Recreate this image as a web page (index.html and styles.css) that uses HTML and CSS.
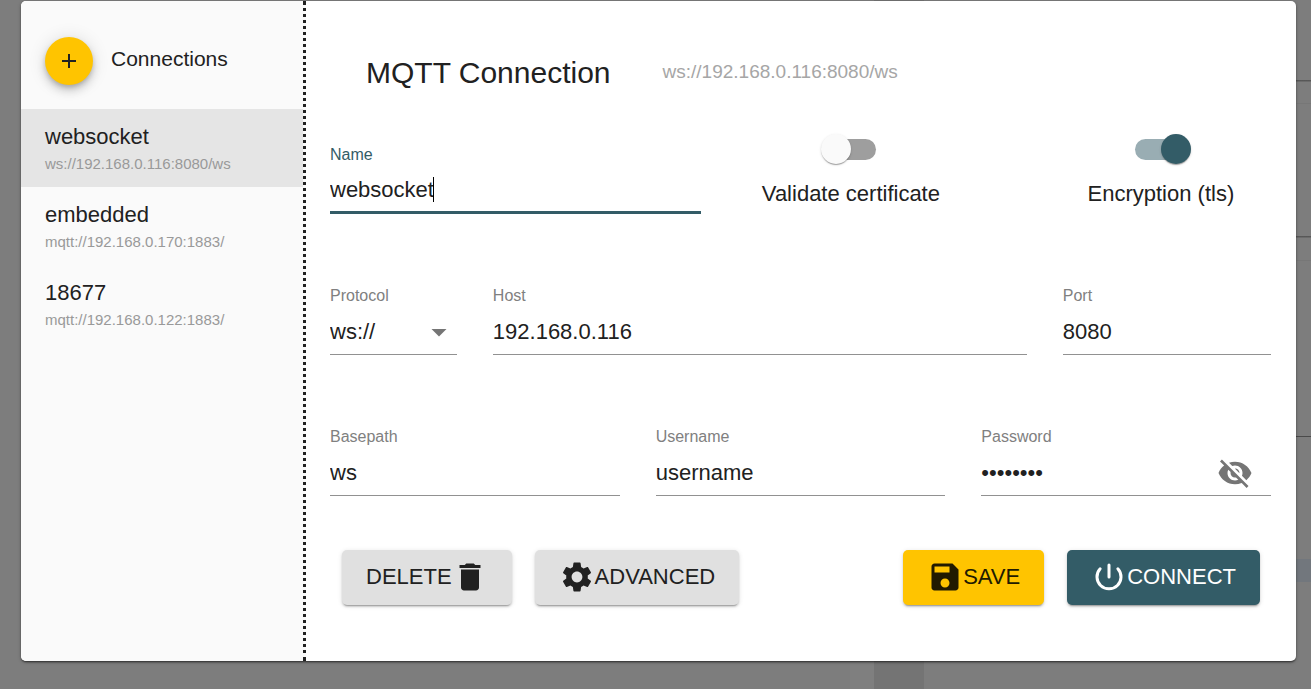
FILE: index.html
```html
<!DOCTYPE html>
<html lang="en">
<head>
<meta charset="utf-8">
<title>MQTT Connection</title>
<link rel="stylesheet" href="styles.css">
</head>
<body>
<main class="dialog">
  <aside class="sidebar">
    <div class="sidebar-head">
      <button class="fab" type="button" aria-label="Add connection">
        <svg viewBox="0 0 24 24" width="24" height="24"><path d="M19 13h-6v6h-2v-6H5v-2h6V5h2v6h6v2z"/></svg>
      </button>
      <h2 class="sidebar-title">Connections</h2>
    </div>
    <ul class="list">
      <li><button class="item selected" type="button"><span class="item-name">websocket</span><span class="item-url">ws://192.168.0.116:8080/ws</span></button></li>
      <li><button class="item" type="button"><span class="item-name">embedded</span><span class="item-url">mqtt://192.168.0.170:1883/</span></button></li>
      <li><button class="item" type="button"><span class="item-name">18677</span><span class="item-url">mqtt://192.168.0.122:1883/</span></button></li>
    </ul>
  </aside>
  <form class="settings">
    <header class="head">
      <h1 class="title">MQTT Connection</h1>
      <span class="subtitle">ws://192.168.0.116:8080/ws</span>
    </header>
    <div class="fields">
      <div class="field span-5 focused">
        <label for="name">Name</label>
        <div class="box"><input class="fit" id="name" type="text" value="websocket"><span class="caret"></span></div>
      </div>
      <div class="toggle span-4 toggle-cert">
        <input class="switch" id="cert" type="checkbox">
        <label for="cert">Validate certificate</label>
      </div>
      <div class="toggle span-3 toggle-tls">
        <input class="switch" id="tls" type="checkbox" checked>
        <label for="tls">Encryption (tls)</label>
      </div>

      <div class="field span-2">
        <label for="protocol">Protocol</label>
        <div class="box select-box">
          <select id="protocol"><option>ws://</option><option>mqtt://</option></select>
          <svg class="arrow" viewBox="0 0 24 24" width="36" height="36"><path d="M7 10l5 5 5-5z"/></svg>
        </div>
      </div>
      <div class="field span-7">
        <label for="host">Host</label>
        <div class="box"><input id="host" type="text" value="192.168.0.116"></div>
      </div>
      <div class="field span-3">
        <label for="port">Port</label>
        <div class="box"><input id="port" type="text" value="8080"></div>
      </div>

      <div class="field span-4">
        <label for="basepath">Basepath</label>
        <div class="box"><input id="basepath" type="text" value="ws"></div>
      </div>
      <div class="field span-4">
        <label for="username">Username</label>
        <div class="box"><input id="username" type="text" value="username"></div>
      </div>
      <div class="field span-4">
        <label for="password">Password</label>
        <div class="box">
          <input id="password" type="password" value="password">
          <button class="reveal" type="button" aria-label="Show password">
            <svg viewBox="0 0 24 24" width="36" height="36"><path d="M12 7c2.76 0 5 2.24 5 5 0 .65-.13 1.26-.36 1.83l2.92 2.92c1.51-1.26 2.7-2.89 3.43-4.75-1.73-4.39-6-7.5-11-7.5-1.4 0-2.74.25-3.98.7l2.16 2.16C10.74 7.13 11.35 7 12 7zM2 4.27l2.28 2.28.46.46C3.08 8.3 1.78 10.02 1 12c1.73 4.39 6 7.5 11 7.5 1.55 0 3.03-.3 4.38-.84l.42.42L19.73 22 21 20.73 3.27 3 2 4.27zM7.53 9.8l1.55 1.55c-.05.21-.08.43-.08.65 0 1.66 1.34 3 3 3 .22 0 .44-.03.65-.08l1.55 1.55c-.67.33-1.41.53-2.2.53-2.76 0-5-2.24-5-5 0-.79.2-1.53.53-2.2zm4.31-.78l3.15 3.15.02-.16c0-1.66-1.34-3-3-3l-.17.01z"/></svg>
          </button>
        </div>
      </div>
    </div>
    <div class="actions">
      <button class="btn" type="button">DELETE<svg viewBox="0 0 24 24" width="36" height="36"><path d="M6 19c0 1.1.9 2 2 2h8c1.1 0 2-.9 2-2V7H6v12zM19 4h-3.5l-1-1h-5l-1 1H5v2h14V4z"/></svg></button>
      <button class="btn" type="button"><svg viewBox="0 0 24 24" width="36" height="36"><path d="M19.14 12.94c.04-.3.06-.61.06-.94 0-.32-.02-.64-.07-.94l2.03-1.58c.18-.14.23-.41.12-.61l-1.92-3.32c-.12-.22-.37-.29-.59-.22l-2.39.96c-.5-.38-1.03-.7-1.62-.94l-.36-2.54c-.04-.24-.24-.41-.48-.41h-3.84c-.24 0-.43.17-.47.41l-.36 2.54c-.59.24-1.13.57-1.62.94l-2.39-.96c-.22-.08-.47 0-.59.22L2.74 8.87c-.12.21-.08.47.12.61l2.03 1.58c-.05.3-.09.63-.09.94s.02.64.07.94l-2.03 1.58c-.18.14-.23.41-.12.61l1.92 3.32c.12.22.37.29.59.22l2.39-.96c.5.38 1.03.7 1.62.94l.36 2.54c.05.24.24.41.48.41h3.84c.24 0 .44-.17.47-.41l.36-2.54c.59-.24 1.13-.56 1.62-.94l2.39.96c.22.08.47 0 .59-.22l1.92-3.32c.12-.22.07-.47-.12-.61l-2.01-1.58zM12 15.6c-1.98 0-3.6-1.62-3.6-3.6s1.62-3.6 3.6-3.6 3.6 1.62 3.6 3.6-1.62 3.6-3.6 3.6z"/></svg>ADVANCED</button>
      <span class="spacer"></span>
      <button class="btn save" type="button"><svg viewBox="0 0 24 24" width="36" height="36"><path d="M17 3H5c-1.11 0-2 .9-2 2v14c0 1.1.89 2 2 2h14c1.1 0 2-.9 2-2V7l-4-4zm-5 16c-1.66 0-3-1.34-3-3s1.34-3 3-3 3 1.34 3 3-1.34 3-3 3zm3-10H5V5h10v4z"/></svg>SAVE</button>
      <button class="btn connect" type="submit"><svg viewBox="0 0 24 24" width="36" height="36"><path class="stroke" d="M12 4v8M6.100 6.500A8 8 0 1 0 17.900 6.500"/></svg>CONNECT</button>
    </div>
  </form>
</main>
</body>
</html>
```
FILE: styles.css
```css
:root {
  --ink: #212121;
  --muted: #808080;
  --teal: #335c67;
  --amber: #ffc400;
}

* {
  box-sizing: border-box;
}

body {
  margin: 0;
  min-height: 100vh;
  padding: 1px 15px 28px 21px;
  font-family: "Liberation Sans", Arial, sans-serif;
  font-size: 22px;
  color: var(--ink);
  background:
    linear-gradient(#4e4e4e, #757575) right 80px / 20px 2px no-repeat,
    linear-gradient(#777, #777) right 103px / 20px 1px no-repeat,
    linear-gradient(#4e4e4e, #757575) right 236px / 20px 2px no-repeat,
    linear-gradient(#777, #777) right 260px / 20px 1px no-repeat,
    linear-gradient(#4a4a4a, #4a4a4a) right 436px / 20px 1px no-repeat,
    linear-gradient(#72777d, #72777d) right 559px / 20px 23px no-repeat,
    linear-gradient(90deg, #7d7d7d 850px, #7f7f7f 850px, #7f7f7f 874px, #747474 874px, #747474 924px, #7d7d7d 924px);
}

button,
input,
select {
  font: inherit;
  color: inherit;
  border: 0;
  background: none;
  padding: 0;
  margin: 0;
  outline: 0;
}

button {
  cursor: pointer;
}

svg {
  display: block;
  fill: currentColor;
  flex: none;
}

.dialog {
  display: flex;
  background: #fff;
  border-radius: 5px;
  overflow: hidden;
  box-shadow: 0 2px 2px -1px rgba(0, 0, 0, .4), 0 1px 2px rgba(0, 0, 0, .24), 0 1px 4px rgba(0, 0, 0, .2);
}

.sidebar {
  flex: none;
  width: 285px;
  background: #fafafa;
  border-right: 3px dotted var(--ink);
}

.sidebar-head {
  display: flex;
  align-items: center;
  gap: 18px;
  padding: 36px 24px 24px;
}

.fab {
  display: grid;
  place-items: center;
  width: 48px;
  height: 48px;
  border-radius: 50%;
  background: var(--amber);
  box-shadow: 0 3px 5px -1px rgba(0, 0, 0, .2), 0 6px 10px rgba(0, 0, 0, .14), 0 1px 18px rgba(0, 0, 0, .12);
}

.sidebar-title {
  margin: 0;
  padding-bottom: 4px;
  font-size: 21px;
  font-weight: 400;
}

.list {
  list-style: none;
  margin: 0;
  padding: 0;
}

.item {
  display: flex;
  flex-direction: column;
  width: 100%;
  padding: 14px 24px 10px;
  text-align: left;
}

.item.selected {
  background: #e5e5e5;
}

.item-name {
  line-height: 28px;
}

.item-url {
  font-size: 15px;
  line-height: 26px;
  color: #999;
}

.settings {
  flex: 1;
  min-width: 0;
  padding: 54px 25px 56px 24px;
}

.head {
  display: flex;
  align-items: center;
  gap: 52px;
  padding: 0 36px;
  margin-bottom: 48px;
}

.title {
  margin: 0;
  font-size: 30px;
  line-height: 36px;
  font-weight: 400;
}

.subtitle {
  padding-bottom: 2px;
  font-size: 19px;
  color: #a6a6a6;
}

.fields {
  display: grid;
  grid-template-columns: repeat(12, minmax(0, 1fr));
  gap: 71px 36px;
}

.span-2 { grid-column: span 2; }
.span-3 { grid-column: span 3; }
.span-4 { grid-column: span 4; }
.span-5 { grid-column: span 5; }
.span-7 { grid-column: span 7; }

.field {
  align-self: end;
}

.field label {
  display: block;
  font-size: 16px;
  line-height: 22px;
  color: var(--muted);
}

.box {
  display: flex;
  align-items: center;
  height: 48px;
  padding-top: 2px;
  border-bottom: 1px solid #919191;
}

.box input,
.box select {
  flex: 1;
  min-width: 0;
  height: 100%;
}

.focused label {
  color: var(--teal);
}

.focused .box {
  border-bottom: 3px solid var(--teal);
}

.box .fit {
  flex: none;
  field-sizing: content;
}

.caret {
  width: 1px;
  height: 25px;
  margin-left: -1px;
  background: #000;
}

.select-box {
  position: relative;
}

.box select {
  appearance: none;
}

.arrow {
  position: absolute;
  right: 0;
  color: #757575;
  pointer-events: none;
}

.reveal {
  margin-right: 18px;
  color: #757575;
}

.toggle {
  display: flex;
  flex-direction: column;
  align-items: center;
  gap: 21px;
  padding-bottom: 7px;
}

.toggle label {
  line-height: 26px;
}

.toggle-cert {
  padding-right: 62px;
}

.toggle-tls {
  padding-right: 12px;
}

.switch {
  appearance: none;
  position: relative;
  width: 51px;
  height: 21px;
  border-radius: 11px;
  background: #9e9e9e;
  cursor: pointer;
}

.switch::before {
  content: "";
  position: absolute;
  top: -5px;
  left: -4px;
  width: 30px;
  height: 30px;
  border-radius: 50%;
  background: #fafafa;
  box-shadow: 0 2px 1px -1px rgba(0, 0, 0, .2), 0 1px 1px rgba(0, 0, 0, .14), 0 1px 3px rgba(0, 0, 0, .12);
}

.switch:checked {
  background: #99adb3;
}

.switch:checked::before {
  left: auto;
  right: -5px;
  background: var(--teal);
}

.actions {
  display: flex;
  gap: 23px;
  padding: 0 11px 0 12px;
  margin-top: 54px;
}

.spacer {
  flex: 1;
}

.btn {
  display: flex;
  align-items: center;
  height: 55px;
  padding: 0 24px 2px;
  border-radius: 5px;
  background: #e0e0e0;
  box-shadow: 0 3px 1px -2px rgba(0, 0, 0, .2), 0 2px 2px rgba(0, 0, 0, .14), 0 1px 5px rgba(0, 0, 0, .12);
}

.save {
  background: var(--amber);
  color: #211a00;
}

.connect {
  background: var(--teal);
  color: #fff;
}

.stroke {
  fill: none;
  stroke: currentColor;
  stroke-width: 2;
  stroke-linecap: round;
}
```
